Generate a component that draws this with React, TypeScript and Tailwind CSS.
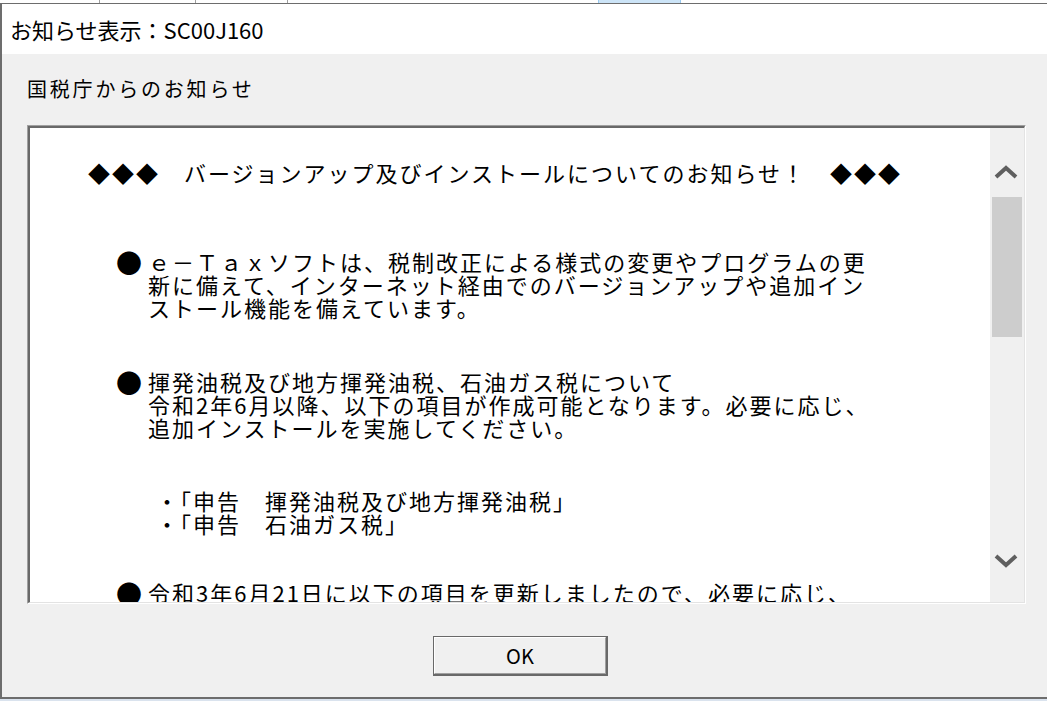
import React from "react";

const jp = "font-['Noto_Sans_CJK_JP','Liberation_Sans',sans-serif]";

function Chevron({ down }: { down?: boolean }) {
  return (
    <svg width="24" height="15" viewBox="0 0 24 15" className="text-[#5f5f5f]">
      <polyline
        points={down ? "2,3 12,12 22,3" : "2,12 12,3 22,12"}
        fill="none"
        stroke="currentColor"
        strokeWidth={4}
      />
    </svg>
  );
}

function Para({ lines }: { lines: string[] }) {
  return (
    <div className="flex pl-[86px]">
      <span className="w-[32px] shrink-0 text-[26px] leading-[23px]">●</span>
      <div>
        {lines.map((l, i) => (
          <div key={i} className="whitespace-nowrap">
            {l}
          </div>
        ))}
      </div>
    </div>
  );
}

export default function App() {
  return (
    <div className={`w-[1047px] h-[701px] overflow-hidden bg-[#dae3ee] ${jp}`}>
      {/* 後ろのウィンドウの端 */}
      <div className="h-[3px] flex bg-white">
        <div className="w-[100px] border-r border-[#a0a0a0]" />
        <div className="w-[96px] border-r border-[#a0a0a0]" />
        <div className="w-[92px] border-r border-[#a0a0a0]" />
        <div className="w-[310px]" />
        <div className="w-[83px] bg-[#cce4f7] border-x border-[#99c9ef]" />
        <div className="flex-1" />
      </div>

      {/* ダイアログ */}
      <div className="border-l-2 border-t border-b-2 border-[#6d6d6d] bg-[#f0f0f0]">
        <div className="h-[50px] bg-white flex items-center pl-[8px] text-[22px] text-black">
          お知らせ表示：SC00J160
        </div>

        <div className="h-[643px] flex flex-col pt-[23px]">
          <div className="pl-[25px] text-[20px] leading-[23px] tracking-[2.8px] text-black">
            国税庁からのお知らせ
          </div>

          {/* テキストボックス */}
          <div className="mt-[25px] ml-[25px] w-[999px] h-[479px] border border-t-[#a0a0a0] border-l-[#a0a0a0] border-r-white border-b-white">
            <div className="h-full flex border-t-2 border-l-2 border-r border-b border-t-[#696969] border-l-[#696969] border-r-[#e3e3e3] border-b-[#e3e3e3]">
              <div className="flex-1 bg-white overflow-hidden text-[22px] leading-[23px] tracking-[2px] text-black">
                <div className="pt-[33px] pl-[58px] whitespace-nowrap">
                  ◆◆◆　バージョンアップ及びインストールについてのお知らせ！　◆◆◆
                </div>
                <div className="mt-[66px]">
                  <Para
                    lines={[
                      "ｅ－Ｔａｘソフトは、税制改正による様式の変更やプログラムの更",
                      "新に備えて、インターネット経由でのバージョンアップや追加イン",
                      "ストール機能を備えています。",
                    ]}
                  />
                </div>
                <div className="mt-[51px]">
                  <Para
                    lines={[
                      "揮発油税及び地方揮発油税、石油ガス税について",
                      "令和2年6月以降、以下の項目が作成可能となります。必要に応じ、",
                      "追加インストールを実施してください。",
                    ]}
                  />
                </div>
                <div className="mt-[50px] pl-[126px]">
                  <div className="whitespace-nowrap">・「申告　揮発油税及び地方揮発油税」</div>
                  <div className="whitespace-nowrap">・「申告　石油ガス税」</div>
                </div>
                <div className="mt-[46px]">
                  <Para lines={["令和3年6月21日に以下の項目を更新しましたので、必要に応じ、"]} />
                </div>
              </div>

              {/* スクロールバー */}
              <div className="w-[34px] bg-[#f0f0f0] flex flex-col">
                <div className="h-[69px] flex justify-center pt-[37px] pr-[2px]">
                  <Chevron />
                </div>
                <div className="ml-[2px] w-[30px] h-[140px] bg-[#cdcdcd]" />
                <div className="flex-1" />
                <div className="flex justify-center pb-[34px] pr-[2px]">
                  <Chevron down />
                </div>
              </div>
            </div>
          </div>

          {/* OKボタン */}
          <div className="mt-[32px] ml-[431px] w-[175px] h-[40px] border border-[#696969] border-r-2 border-b-2">
            <div className="h-full border border-t-white border-l-white border-r-[#a0a0a0] border-b-[#a0a0a0] flex items-center justify-center text-[20px] text-black">
              OK
            </div>
          </div>
        </div>
      </div>
    </div>
  );
}
